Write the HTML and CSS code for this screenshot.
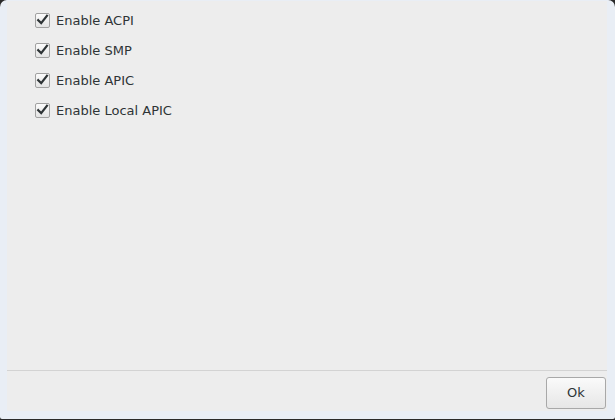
FILE: index.html
```html
<!DOCTYPE html>
<html>
<head>
<meta charset="utf-8">
<link rel="stylesheet" href="styles.css">
</head>
<body>
<div class="window">
  <div class="content">
    <label class="check"><span class="box"><svg viewBox="0 0 14 14" width="14" height="14"><path d="M2.4 7.2 L5.6 10.4 L11.8 2.4" fill="none" stroke="#2e3436" stroke-width="2.4" stroke-linecap="square"/></svg></span><span class="lbl">Enable ACPI</span></label>
    <label class="check"><span class="box"><svg viewBox="0 0 14 14" width="14" height="14"><path d="M2.4 7.2 L5.6 10.4 L11.8 2.4" fill="none" stroke="#2e3436" stroke-width="2.4" stroke-linecap="square"/></svg></span><span class="lbl">Enable SMP</span></label>
    <label class="check"><span class="box"><svg viewBox="0 0 14 14" width="14" height="14"><path d="M2.4 7.2 L5.6 10.4 L11.8 2.4" fill="none" stroke="#2e3436" stroke-width="2.4" stroke-linecap="square"/></svg></span><span class="lbl">Enable APIC</span></label>
    <label class="check"><span class="box"><svg viewBox="0 0 14 14" width="14" height="14"><path d="M2.4 7.2 L5.6 10.4 L11.8 2.4" fill="none" stroke="#2e3436" stroke-width="2.4" stroke-linecap="square"/></svg></span><span class="lbl">Enable Local APIC</span></label>
  </div>
  <div class="actions">
    <button class="btn">Ok</button>
  </div>
</div>
</body>
</html>
```
FILE: styles.css
```css
html, body {
  margin: 0;
  padding: 0;
  width: 615px;
  height: 420px;
  background: #2a2a2a;
  overflow: hidden;
}
.window {
  box-sizing: border-box;
  width: 615px;
  height: 419px;
  background: #ededed;
  border: solid #e9eef5;
  border-width: 1px 8px 8px 7px;
  border-radius: 7px 7px 2px 2px;
  display: flex;
  flex-direction: column;
  font-family: "DejaVu Sans", sans-serif;
  font-size: 13px;
  color: #2e3436;
}
.content {
  flex: 1;
  display: flex;
  flex-direction: column;
  padding: 11px 0 0 28px;
  gap: 14px;
}
.check {
  display: flex;
  align-items: center;
  gap: 6px;
  height: 16px;
}
.box {
  box-sizing: border-box;
  width: 15px;
  height: 15px;
  border: 1px solid #a1a1a1;
  border-radius: 2px;
  background: linear-gradient(#fbfbfb, #e4e4e4);
  display: flex;
  align-items: center;
  justify-content: center;
}
.actions {
  border-top: 1px solid #d3d3d3;
  height: 40px;
  display: flex;
  justify-content: flex-end;
  align-items: center;
  padding-right: 1px;
}
.btn {
  width: 60px;
  height: 32px;
  border: 1px solid #a8a8a8;
  border-radius: 3px;
  background: linear-gradient(#fafafa, #e6e6e6);
  font-family: "DejaVu Sans", sans-serif;
  font-size: 13px;
  color: #2e3436;
  margin-top: 3px;
}
```
